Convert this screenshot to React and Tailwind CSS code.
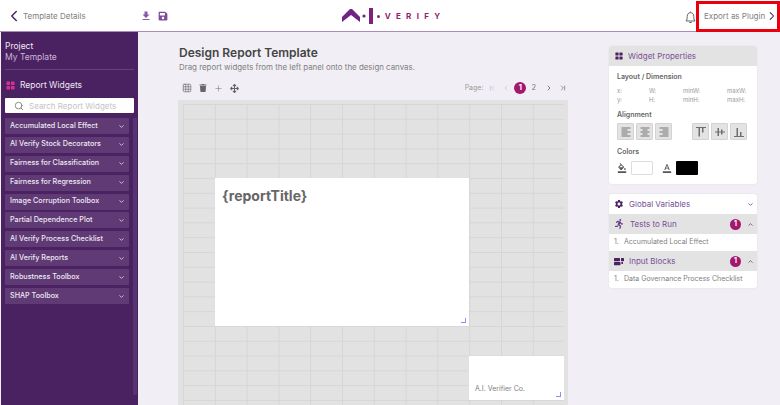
import React from 'react';
import {
  ChevronLeft, ChevronRight, ChevronDown, ChevronUp, Search, Grid3x3, Plus, ChevronFirst, ChevronLast,
} from 'lucide-react';
import { FaArrowsAlt, FaRunning, FaSave, FaTrash } from 'react-icons/fa';
import {
  MdFileDownload, MdFormatAlignCenter, MdFormatAlignLeft, MdFormatAlignRight, MdFormatColorFill, MdFormatColorText, MdSettings,
} from 'react-icons/md';

const widgets = [
  'Accumulated Local Effect',
  'AI Verify Stock Decorators',
  'Fairness for Classification',
  'Fairness for Regression',
  'Image Corruption Toolbox',
  'Partial Dependence Plot',
  'AI Verify Process Checklist',
  'AI Verify Reports',
  'Robustness Toolbox',
  'SHAP Toolbox',
];

function Logo() {
  return (
    <div className="flex items-center h-[16px]">
      <svg width="31" height="16" viewBox="0 0 31 16">
        <path d="M0 14 L0 9 L8 1 L10 1 L18 9 L18 14 L9 7 Z" fill="#6f2382" />
        <circle cx="22" cy="8" r="1.6" fill="#6f2382" />
        <rect x="27" y="0" width="4" height="16" fill="#7c2180" />
      </svg>
      <div className="w-[3px] h-[3px] rounded-full bg-[#8a1f78] ml-[4px]" />
      <span className="ml-[5px] text-[8px] font-bold tracking-[5.3px] leading-none text-[#93206f]">VERIFY</span>
    </div>
  );
}

function BlocksIcon({ color, size, gap }) {
  return (
    <svg width={size} height={size} viewBox="0 0 10 10">
      <rect x="0.5" y="0.5" width="4" height="4" rx="0.7" fill={color} />
      <rect x="5.5" y="0.5" width="4" height="4" rx="0.7" fill={color} />
      <rect x="0.5" y="5.5" width="4" height="4" rx="0.7" fill={color} />
      <rect x="5.5" y="5.5" width="4" height="4" rx="0.7" fill={color} />
    </svg>
  );
}

function InputBlocksIcon() {
  return (
    <svg width="10" height="9" viewBox="0 0 10 9">
      <rect x="0" y="1" width="6" height="3.2" rx="0.6" fill="#4b2261" />
      <rect x="0" y="5" width="6.5" height="3.2" rx="0.6" fill="#4b2261" />
      <rect x="7" y="1" width="3" height="3.2" rx="0.6" fill="#4b2261" />
      <rect x="7.4" y="5" width="1.6" height="2" fill="#4b2261" />
    </svg>
  );
}

function VAlignIcon({ kind }) {
  const line = kind === 'top' ? 1.5 : kind === 'center' ? 6 : 10.5;
  const a = kind === 'top' ? [1.5, 9] : kind === 'center' ? [2, 8] : [2, 8.5];
  const b = kind === 'top' ? [1.5, 5] : kind === 'center' ? [3.5, 5] : [6, 4.5];
  return (
    <svg width="12" height="12" viewBox="0 0 12 12">
      <rect x="1" y={line - 0.5} width="10" height="1" fill="#6f6f6f" />
      <rect x="3.5" y={a[0]} width="1.5" height={a[1]} fill="#6f6f6f" />
      <rect x="7" y={b[0]} width="1.5" height={b[1]} fill="#6f6f6f" />
    </svg>
  );
}

function Resizer() {
  return <div className="absolute right-[3px] bottom-[3px] w-[5px] h-[5px] border-r border-b border-[#8f8fe8]" />;
}

function AlignButton({ children }) {
  return (
    <div className="w-[17px] h-[17px] bg-[#e3e3e3] border border-[#d3d3d3] rounded-[1px] flex items-center justify-center text-[#777]">
      {children}
    </div>
  );
}

function Badge() {
  return (
    <div className="w-[11px] h-[11px] rounded-full bg-[#a3176f] text-white text-[7px] font-bold flex items-center justify-center">1</div>
  );
}

export default function App() {
  return (
    <div className="w-[780px] h-[405px] overflow-hidden flex flex-col bg-[#f1eff5] font-['Inter',sans-serif]">
      <header className="h-[32px] shrink-0 bg-white border-b border-[#ab8cbc] flex items-center">
        <ChevronLeft size={18} strokeWidth={2} className="ml-[5px] text-[#4a2364]" />
        <span className="text-[8px] text-[#808080]">Template Details</span>
        <MdFileDownload size={12} className="ml-[54px] text-[#8a5aa5]" />
        <FaSave size={10} className="ml-[6px] text-[#7d4b9c]" />
        <div className="ml-[174px] mt-px"><Logo /></div>
        <svg width="11" height="13" viewBox="0 0 11 13" fill="none" stroke="#555" strokeWidth="0.9" className="ml-auto mr-[-1px] mt-[3px]">
          <path d="M1 10 C2.2 8.6 2.2 7.5 2.2 5.5 C2.2 3.2 3.6 1.6 5.5 1.6 C7.4 1.6 8.8 3.2 8.8 5.5 C8.8 7.5 8.8 8.6 10 10 Z" />
          <path d="M4.3 11.5 H6.7" />
          <path d="M5.5 0.5 V1.6" />
        </svg>
        <div className="w-[84px] h-[31px] border-[3px] border-[#e8000d] flex items-center pl-[5px] mb-[-1px] bg-white ml-px">
          <span className="text-[8px] text-[#808080] whitespace-nowrap">Export as Plugin</span>
          <ChevronRight size={16} strokeWidth={1.8} className="ml-auto mr-[-2px] text-[#4a2364]" />
        </div>
      </header>

      <div className="flex-1 flex min-h-0">
        <aside className="w-[137px] ml-px shrink-0 bg-[#4b2261] flex flex-col pt-[9px]">
          <div className="px-[4px] text-[8.5px] leading-[11px] text-[#f0e8f4]">Project</div>
          <div className="px-[4px] text-[8.5px] leading-[11px] text-[#c9b6d5]">My Template</div>
          <div className="mx-[4px] mt-[6px] border-t border-[#64417a]" />
          <div className="flex items-center px-[5px] mt-[9px] h-[12px]">
            <BlocksIcon color="#d62f93" size={9} />
            <span className="ml-[5px] text-[8.5px] text-[#efe6f3]">Report Widgets</span>
          </div>
          <div className="mx-[4px] mt-[7px] h-[15px] bg-white rounded-[1px] flex items-center pl-[9px]">
            <Search size={10} strokeWidth={2} className="text-[#777]" />
            <span className="ml-[5px] text-[8px] text-[#c4c4c4]">Search Report Widgets</span>
          </div>
          <div className="flex mt-[5px]">
            <div className="flex flex-col gap-[2.9px] pl-[4px]">
              {widgets.map((name) => (
                <div key={name} className="w-[124px] h-[16px] bg-[#5f3a75] rounded-[1px] flex items-center pl-[5px] pr-[3px]">
                  <span className="text-[7.2px] font-medium text-[#efe8f3] whitespace-nowrap">{name}</span>
                  <ChevronDown size={7} strokeWidth={3} className="ml-auto mr-[1px] text-[#d8cce0]" />
                </div>
              ))}
            </div>
            <div className="w-[4px] ml-[4px] h-[277px] bg-[#573370] rounded-[1px]" />
          </div>
        </aside>

        <main className="w-[430px] shrink-0 pl-[41px] pt-[13px] min-h-0">
          <h1 className="text-[12px] leading-[15px] font-semibold text-[#444]">Design Report Template</h1>
          <p className="mt-[2px] text-[7.9px] leading-[10px] text-[#808080]">Drag report widgets from the left panel onto the design canvas.</p>
          <div className="flex items-center h-[14px] mt-[9px] ml-[3px] w-[385px]">
            <Grid3x3 size={10} strokeWidth={1.5} className="text-[#666]" />
            <FaTrash size={8} className="ml-[7px] text-[#666]" />
            <Plus size={9} strokeWidth={1.5} className="ml-[7px] text-[#777]" />
            <FaArrowsAlt size={9} className="ml-[7px] text-[#666]" />
            <span className="ml-auto text-[7px] text-[#999]">Page:</span>
            <ChevronFirst size={8} className="ml-[5px] text-[#bbb]" />
            <ChevronLeft size={8} className="ml-[6px] text-[#bbb]" />
            <div className="ml-[4px] w-[12px] h-[12px] rounded-full bg-[#a3176f] text-white text-[7.5px] font-bold flex items-center justify-center">1</div>
            <span className="ml-[5px] text-[7.5px] text-[#777]">2</span>
            <ChevronRight size={8} strokeWidth={2.5} className="ml-[9px] text-[#666]" />
            <ChevronLast size={8} strokeWidth={2} className="ml-[6px] text-[#666]" />
          </div>
          <div className="relative mt-[5px] ml-[-1px] w-[390px] h-[305px] bg-[#e2e2e2] pl-[5px] pt-[4px]">
            <div className="h-full w-[381px] bg-[linear-gradient(to_right,#d6d6d6_1px,transparent_1px),linear-gradient(to_bottom,#d6d6d6_1px,transparent_1px)] bg-[length:31.8px_14.8px]" />
            <div className="absolute left-[37px] top-[78px] w-[254px] h-[148px] bg-white px-[7px] py-[5px]">
              <span className="text-[14px] font-bold leading-[18px] text-[#666]">{'{reportTitle}'}</span>
              <Resizer />
            </div>
            <div className="absolute left-[291px] top-[256px] w-[95px] h-[44px] bg-white">
              <span className="absolute left-[6px] bottom-[7px] text-[7px] leading-[9px] text-[#808080]">A.I. Verifier Co.</span>
              <Resizer />
            </div>
          </div>
        </main>

        <div className="w-[148px] ml-[41px] shrink-0 pt-[14px]">
          <section className="bg-white rounded-[3px] h-[138px] shadow-[0_0_2px_#ddd]">
            <div className="h-[20px] bg-[#e3e3e3] rounded-t-[3px] flex items-center pl-[6px]">
              <BlocksIcon color="#4b2261" size={8} />
              <span className="ml-[5px] text-[8px] text-[#7b4f97]">Widget Properties</span>
            </div>
            <div className="px-[8px] pt-[6px]">
              <div className="text-[7px] leading-[9px] font-semibold text-[#666]">Layout / Dimension</div>
              <div className="mt-[5px] grid grid-cols-[32px_34px_44px_auto] text-[6px] leading-[9px] text-[#999]">
                <span>x:</span><span>W:</span><span>minW:</span><span>maxW:</span>
                <span>y:</span><span>H:</span><span>minH:</span><span>maxH:</span>
              </div>
              <div className="mt-[6px] text-[7px] leading-[9px] font-semibold text-[#666]">Alignment</div>
              <div className="mt-[4px] flex gap-[2px]">
                <AlignButton><MdFormatAlignLeft size={12} /></AlignButton>
                <AlignButton><MdFormatAlignCenter size={12} /></AlignButton>
                <AlignButton><MdFormatAlignRight size={12} /></AlignButton>
                <div className="w-[16px]" />
                <AlignButton><VAlignIcon kind="top" /></AlignButton>
                <AlignButton><VAlignIcon kind="center" /></AlignButton>
                <AlignButton><VAlignIcon kind="bottom" /></AlignButton>
              </div>
              <div className="mt-[7px] text-[7px] leading-[9px] font-semibold text-[#666]">Colors</div>
              <div className="mt-[5px] flex items-center">
                <MdFormatColorFill size={10} className="text-[#555]" />
                <div className="ml-[4px] w-[22px] h-[14px] bg-white border border-[#ddd] rounded-[1px]" />
                <MdFormatColorText size={10} className="ml-[9px] text-[#555]" />
                <div className="ml-[4px] w-[22px] h-[14px] bg-black rounded-[1px]" />
              </div>
            </div>
          </section>

          <section className="mt-[10px] bg-white rounded-[3px] h-[94px] shadow-[0_0_2px_#ddd] overflow-hidden">
            <div className="h-[20px] flex items-center pl-[5px] pr-[3px]">
              <MdSettings size={10} className="text-[#4b2261]" />
              <span className="ml-[5px] text-[8px] text-[#7b4f97]">Global Variables</span>
              <ChevronDown size={7} strokeWidth={3} className="ml-auto text-[#7b4f97]" />
            </div>
            <div className="h-[20px] bg-[#e3e3e3] flex items-center pl-[5px] pr-[3px]">
              <FaRunning size={10} className="text-[#6d3d8c]" />
              <span className="ml-[6px] text-[8px] text-[#7b4f97]">Tests to Run</span>
              <div className="ml-auto mr-[6px]"><Badge /></div>
              <ChevronUp size={7} strokeWidth={3} className="text-[#7b4f97]" />
            </div>
            <div className="h-[17px] flex items-center pl-[5px] text-[7px] text-[#808080]">
              <span className="w-[10px]">1.</span>Accumulated Local Effect
            </div>
            <div className="h-[20px] bg-[#e3e3e3] flex items-center pl-[5px] pr-[3px]">
              <InputBlocksIcon />
              <span className="ml-[5px] text-[8px] text-[#7b4f97]">Input Blocks</span>
              <div className="ml-auto mr-[6px]"><Badge /></div>
              <ChevronUp size={7} strokeWidth={3} className="text-[#7b4f97]" />
            </div>
            <div className="h-[17px] flex items-center pl-[5px] text-[7px] text-[#808080]">
              <span className="w-[10px]">1.</span>Data Governance Process Checklist
            </div>
          </section>
        </div>
      </div>
    </div>
  );
}
